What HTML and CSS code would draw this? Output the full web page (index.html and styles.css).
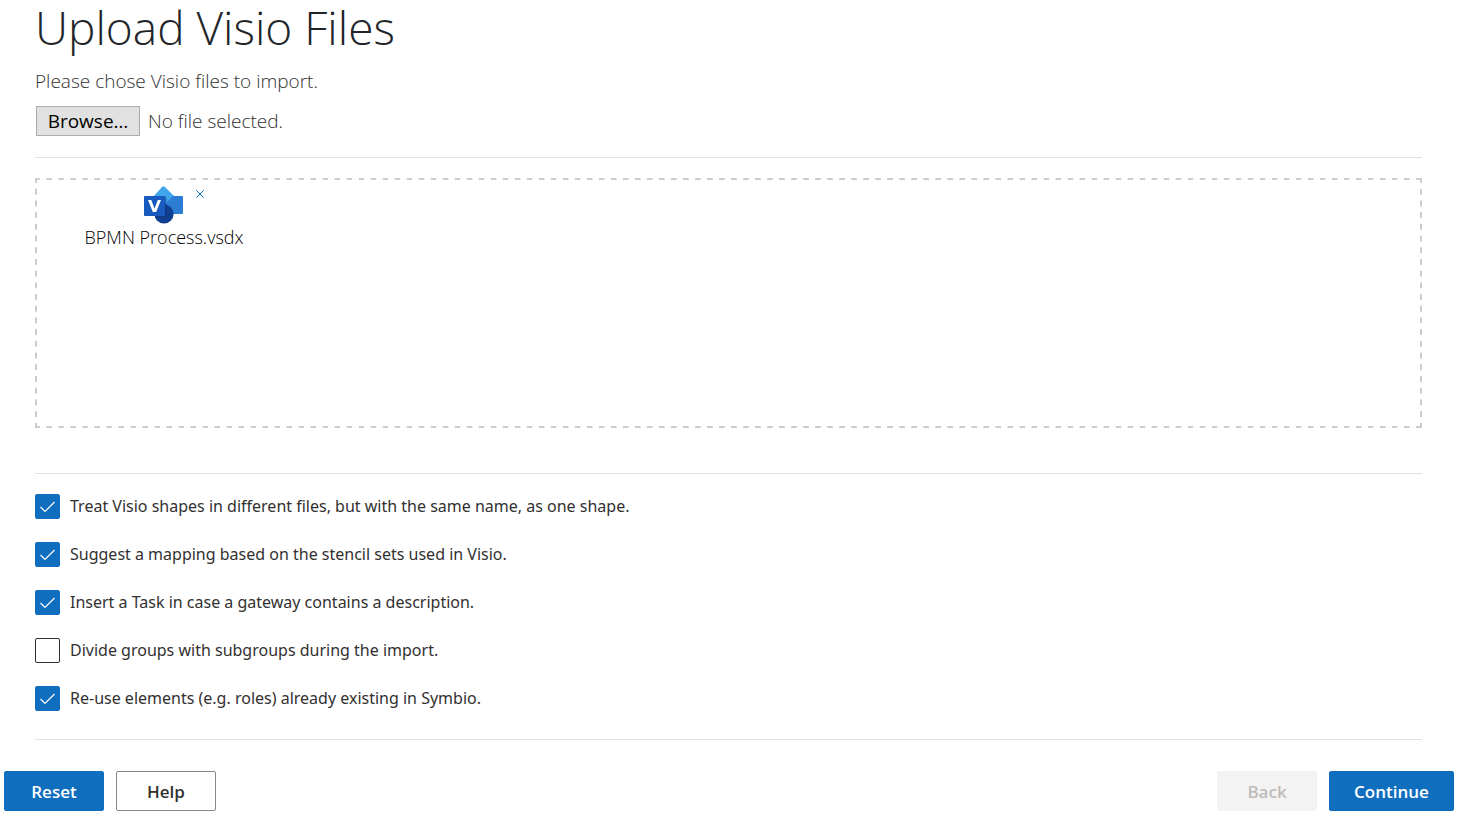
FILE: index.html
```html
<!DOCTYPE html>
<html lang="en">
<head>
<meta charset="utf-8">
<meta name="viewport" content="width=device-width, initial-scale=1">
<title>Upload Visio Files</title>
<link rel="stylesheet" href="styles.css">
</head>
<body>
<form class="wizard">
  <main class="content">
    <h1 class="title">Upload Visio Files</h1>
    <p class="intro" id="intro">Please chose Visio files to import.</p>
    <div class="picker">
      <button class="browse" type="button" aria-describedby="intro">Browse…</button>
      <span class="picker-status">No file selected.</span>
    </div>
    <section class="dropzone" aria-label="Files to import">
      <div class="file">
        <div class="file-head">
          <svg class="file-icon" viewBox="0 0 40 38" aria-hidden="true">
            <path fill="#41a5ee" d="M9 11 18 1Q19.500-.5 21 1L31 11 20 22Z"/>
            <path fill="#2b7cd3" d="M20 19 29 10H38Q39 10 39 11V27Q39 28 38 28H24Z"/>
            <circle cx="20" cy="28" r="9.600" fill="#103f91"/>
            <path fill="#0b317c" opacity=".5" d="M11 10H20Q22.500 10 22.500 12V29Q22.500 31 20 31H11Z"/>
            <rect x="0" y="10" width="21" height="20" rx="1" fill="#185abd"/>
            <path fill="#fff" d="M4 14H7.300L10.500 22.500 13.800 14H17L12.200 26H8.800Z"/>
          </svg>
          <button class="remove" type="button" aria-label="Remove BPMN Process.vsdx">
            <svg viewBox="0 0 8 8" aria-hidden="true"><path d="M.3.3 7.700 7.700M7.700.3.3 7.700"/></svg>
          </button>
        </div>
        <span class="file-name">BPMN Process.vsdx</span>
      </div>
    </section>
    <div class="options">
      <label class="option"><span class="box"><input type="checkbox" checked><svg viewBox="0 0 25 25" aria-hidden="true"><path d="M5.500 13 10 17.500 19.500 8"/></svg></span>Treat Visio shapes in different files, but with the same name, as one shape.</label>
      <label class="option"><span class="box"><input type="checkbox" checked><svg viewBox="0 0 25 25" aria-hidden="true"><path d="M5.500 13 10 17.500 19.500 8"/></svg></span>Suggest a mapping based on the stencil sets used in Visio.</label>
      <label class="option"><span class="box"><input type="checkbox" checked><svg viewBox="0 0 25 25" aria-hidden="true"><path d="M5.500 13 10 17.500 19.500 8"/></svg></span>Insert a Task in case a gateway contains a description.</label>
      <label class="option"><span class="box"><input type="checkbox"><svg viewBox="0 0 25 25" aria-hidden="true"><path d="M5.500 13 10 17.500 19.500 8"/></svg></span>Divide groups with subgroups during the import.</label>
      <label class="option"><span class="box"><input type="checkbox" checked><svg viewBox="0 0 25 25" aria-hidden="true"><path d="M5.500 13 10 17.500 19.500 8"/></svg></span>Re-use elements (e.g. roles) already existing in Symbio.</label>
    </div>
  </main>
  <footer class="actions">
    <button class="button primary" type="reset">Reset</button>
    <button class="button" type="button">Help</button>
    <button class="button back" type="button" disabled>Back</button>
    <button class="button primary wide" type="submit">Continue</button>
  </footer>
</form>
</body>
</html>
```
FILE: styles.css
```css
* {
  box-sizing: border-box;
}

body {
  margin: 0;
  background: #fff;
  color: #323130;
  font: 17px/24px "Segoe UI", "Open Sans", "Noto Sans", sans-serif;
}

button {
  margin: 0;
  font: inherit;
  cursor: pointer;
}

.content {
  padding: 0 39px 0 35px;
}

.title {
  margin: 0;
  color: #212529;
  font-size: 46px;
  font-weight: 300;
  line-height: 54px;
}

.intro {
  margin: 14px 0 12px;
  font-size: 19px;
  font-weight: 300;
  line-height: 26px;
}

.picker {
  display: flex;
  align-items: center;
  gap: 8px;
  padding: 0 0 21px 1px;
  border-bottom: 1px solid #e1e1e1;
  font-size: 19px;
  font-weight: 300;
}

.browse {
  min-width: 104px;
  height: 30px;
  padding: 0 8px;
  border: 1px solid #adadad;
  background: #e1e1e1;
  color: #000;
  font-size: 19px;
  font-weight: 400;
  line-height: 28px;
}

.dropzone {
  --dash-x: repeating-linear-gradient(90deg, #ccc 0 3px, transparent 3px 9px, #ccc 9px 12px);
  --dash-y: repeating-linear-gradient(#ccc 0 3px, transparent 3px 9px, #ccc 9px 12px);
  min-height: 250px;
  margin: 20px 0 45px;
  padding: 6px 0 0 26px;
  border: 2px solid transparent;
  background-image: var(--dash-x), var(--dash-x), var(--dash-y), var(--dash-y);
  background-position: left 0 top -2px, left 0 bottom -2px, left -2px top 0, right -2px top 0;
  background-repeat: round no-repeat, round no-repeat, no-repeat round, no-repeat round;
  background-size: 12px 2px, 12px 2px, 2px 12px, 2px 12px;
}

.file {
  display: flex;
  flex-direction: column;
  align-items: center;
  width: 202px;
}

.file-head {
  display: grid;
  grid-template-columns: 1fr 40px 1fr;
  width: 100%;
}

.file-icon {
  grid-column: 2;
  width: 40px;
  height: 38px;
}

.remove {
  display: grid;
  place-items: center;
  width: 16px;
  height: 16px;
  margin-left: 8px;
  padding: 0;
  border: 0;
  background: none;
}

.remove svg {
  width: 8px;
  height: 8px;
  stroke: #106ebe;
  stroke-width: 1;
}

.file-name {
  color: #000;
  font-size: 18px;
  font-weight: 300;
  line-height: 26px;
}

.options {
  display: grid;
  justify-items: start;
  gap: 23px;
  padding: 20px 0 28px;
  border: solid #e1e1e1;
  border-width: 1px 0;
}

.option {
  display: flex;
  align-items: center;
  gap: 10px;
  font-family: "Segoe UI", "Noto Sans", sans-serif;
  font-size: 16px;
  line-height: 25px;
  cursor: pointer;
}

.box {
  display: grid;
  flex: none;
}

.box > * {
  grid-area: 1 / 1;
  width: 25px;
  height: 25px;
}

.box input {
  margin: 0;
  appearance: none;
  border: 1px solid #323130;
  border-radius: 2px;
  background: #fff;
}

.box input:checked {
  border-color: #106ebe;
  background: #106ebe;
}

.box svg {
  z-index: 1;
  fill: none;
  stroke: #fff;
  stroke-width: 1.200;
  visibility: hidden;
  pointer-events: none;
}

.box input:checked + svg {
  visibility: visible;
}

.actions {
  display: flex;
  gap: 12px;
  padding: 31px 7px 7px 4px;
}

.button {
  min-width: 100px;
  height: 40px;
  padding: 2px 20px 0;
  border: 1px solid #8a8886;
  border-radius: 2px;
  background: #fff;
  color: #323130;
  font-weight: 600;
}

.primary {
  border-color: #106ebe;
  background: #106ebe;
  color: #fff;
}

.back {
  margin-left: auto;
  border-color: #f3f3f3;
  background: #f3f3f3;
  color: #bebbb8;
  cursor: default;
}

.wide {
  min-width: 125px;
}
```
